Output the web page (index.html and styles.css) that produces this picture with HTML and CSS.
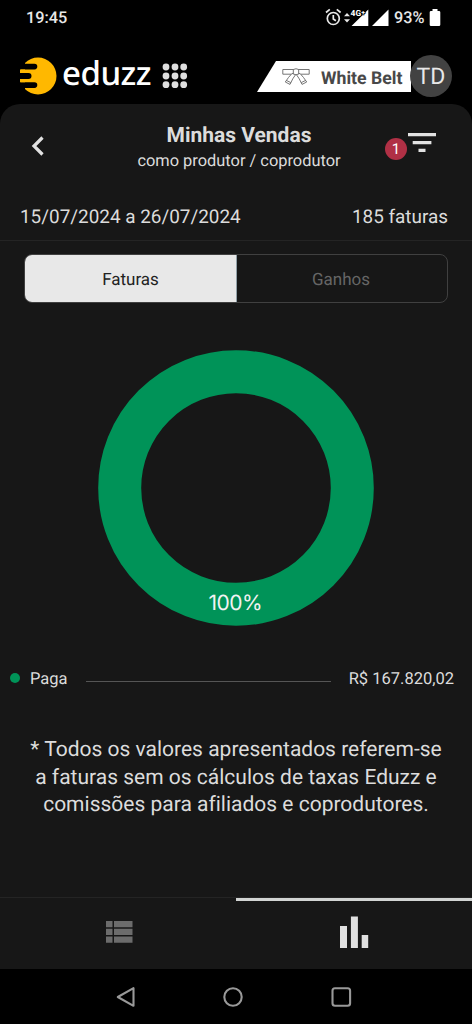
FILE: index.html
```html
<!DOCTYPE html>
<html lang="pt-BR">
<head>
<meta charset="utf-8">
<title>Minhas Vendas</title>
<link rel="stylesheet" href="styles.css">
</head>
<body>
<div class="phone">
  <div class="status">
    <span class="clock">19:45</span>
    <svg class="status-icons" width="66" height="22" viewBox="0 0 66 22">
      <circle cx="8.3" cy="11.5" r="6" fill="none" stroke="#e8e8e8" stroke-width="1.7"/>
      <path d="M8.3 8v4l2.6 1.8M1 5.5l3.8-3.2M15.6 5.5l-3.8-3.2" fill="none" stroke="#e8e8e8" stroke-width="1.7"/>
      <path d="M19 9.3l3-3.3 3 3.3zM19 12.2l3 3.3 3-3.3z" fill="#e8e8e8"/>
      <path d="M26.500 19L43.300 2.500v16.500zM47 19L63.500 2.500v16.500z" fill="#fff"/>
      <text class="network" x="25.500" y="8.600">4G<tspan dy="-1" font-size="7">+</tspan></text>
    </svg>
    <span class="percent">93%</span>
    <svg class="battery" width="12" height="18" viewBox="0 0 12 18"><path d="M3.500 0h5v2H10q1.300 0 1.300 1.300v12.400q0 1.300-1.300 1.300H2Q.7 17 .7 15.700V3.300Q.7 2 2 2h1.500z" fill="#fff"/></svg>
  </div>
  <header class="topbar">
    <svg class="mark" width="37" height="38" viewBox="0 0 37 38">
      <circle cx="18" cy="19" r="18.500" fill="#ffb800"/>
      <path d="M-1 0H5V7H-1zM-1 31H5V38H-1zM-1 6.800H14.500a2.800 2.800 0 0 1 0 5.600H-1zM-1 16H8.500a3 3 0 0 1 0 6H-1zM-1 25.300H14.500a2.800 2.800 0 0 1 0 5.600H-1z" fill="#000"/>
      <path d="M0 12.400h5v3.600H0zM0 22h5v3.300H0z" fill="#ffb800"/>
    </svg>
    <span class="brand">eduzz</span>
    <svg class="apps" width="26" height="26" viewBox="0 0 26 26" fill="#dedede">
      <circle cx="4" cy="4" r="3.400"/><circle cx="13" cy="4" r="3.400"/><circle cx="21.700" cy="4" r="3.400"/>
      <circle cx="4" cy="13" r="3.400"/><circle cx="13" cy="13" r="3.400"/><circle cx="21.700" cy="13" r="3.400"/>
      <circle cx="4" cy="21.700" r="3.400"/><circle cx="13" cy="21.700" r="3.400"/><circle cx="21.700" cy="21.700" r="3.400"/>
    </svg>
    <div class="belt">
      <svg class="belt-icon" width="28" height="17" viewBox="0 0 28 17" fill="#fff" stroke="#666" stroke-width=".9" stroke-linejoin="round">
        <path d="M.8 1.500H12v4.700H.8zM16 1.500h11.200v4.700H16z"/>
        <path d="M10 5.500Q6.500 9 3.300 14l4.700 2.400Q10.500 10.500 14 6zM18 5.500Q21.500 9 24.700 14L20 16.400Q17.500 10.500 14 6z"/>
        <path d="M11.300 1.500Q14 0 16.700 1.500V6Q14 7.500 11.300 6z"/>
        <path d="M4.300 12.400l4.500 2.200M23.700 12.400l-4.500 2.200" fill="none"/>
      </svg>
      <span class="belt-name">White Belt</span>
    </div>
    <span class="avatar">TD</span>
  </header>
  <main class="panel">
    <div class="heading">
      <svg class="back" width="14" height="20" viewBox="0 0 14 20"><path d="M11.500 1.500L3 10l8.500 8.500" fill="none" stroke="#e2e2e2" stroke-width="3.200"/></svg>
      <div class="titles">
        <h1>Minhas Vendas</h1>
        <p>como produtor / coprodutor</p>
      </div>
      <div class="filter">
        <span class="count">1</span>
        <svg width="28" height="20" viewBox="0 0 28 20"><path d="M0 0h28v3.200H0zM4.700 8h18.700v3.200H4.700zM10.500 15.800h7V19h-7z" fill="#e2e2e2"/></svg>
      </div>
    </div>
    <div class="summary"><span class="period">15/07/2024 a 26/07/2024</span><span class="invoices">185 faturas</span></div>
    <div class="tabs"><span class="tab active">Faturas</span><span class="tab">Ganhos</span></div>
    <svg class="chart" width="276" height="276" viewBox="0 0 276 276">
      <circle cx="138" cy="138" r="116.300" fill="none" stroke="#009358" stroke-width="43"/>
      <text class="share" x="137.500" y="259.500" text-anchor="middle" textLength="54">100%</text>
    </svg>
    <div class="legend"><i class="dot"></i><span class="legend-name">Paga</span><i class="rule"></i><span class="amount">R$ 167.820,02</span></div>
    <p class="note">* Todos os valores apresentados referem-se<br>a faturas sem os cálculos de taxas Eduzz e<br>comissões para afiliados e coprodutores.</p>
    <nav class="views">
      <span class="view"><svg width="27" height="22" viewBox="0 0 27 22"><path d="M0 0h6.500v6.300H0zM8 0h18.500v6.300H8zM0 7.800h6.500v6.200H0zM8 7.800h18.500v6.200H8zM0 15.500h6.500v6.300H0zM8 15.500h18.500v6.300H8z" fill="#6c6c6c"/></svg></span>
      <span class="view current"><svg width="30" height="32" viewBox="0 0 30 32"><path d="M1 10h7v22H1zM11.900 0.500h7V32h-7zM22.700 19h6.500v13h-6.500z" fill="#e0e0e0"/></svg></span>
    </nav>
  </main>
  <div class="system">
    <svg width="236" height="22" viewBox="0 0 236 22" fill="none" stroke="#999" stroke-width="2.100" stroke-linejoin="round">
      <path d="M1.800 11L17.500 2.200v17.600z"/><circle cx="117" cy="11" r="8.700"/><rect x="216.500" y="2.200" width="17.600" height="17.600" rx="2.500"/>
    </svg>
  </div>
</div>
</body>
</html>
```
FILE: styles.css
```css
* { box-sizing: border-box; }
body { margin: 0; background: #000; color: #dcdcdc; font-family: Roboto, sans-serif; text-rendering: geometricPrecision; font-variant-ligatures: none; }
h1, p { margin: 0; }
svg { display: block; flex: none; }
span { white-space: nowrap; }
.phone { width: 472px; height: 1024px; display: flex; flex-direction: column; overflow: hidden; }
.status { height: 50px; padding: 7px 31px 0 26px; display: flex; align-items: flex-start; color: #e8e8e8; font-size: 16.300px; line-height: 22px; font-weight: 500; }
.status-icons { margin-left: auto; }
.network { font: 700 8.500px Roboto, sans-serif; fill: #fff; stroke: #000; stroke-width: 1.500px; paint-order: stroke; }
.percent { width: 31px; margin-left: 3px; }
.battery { margin: 2px 0 0 4px; }
.topbar { height: 54px; padding: 0 20px 0 20px; display: flex; align-items: flex-start; }
.mark { margin-top: 7px; }
.brand { width: 92px; margin-left: 5px; font: 500 33px/40px "Noto Sans", sans-serif; letter-spacing: -.5px; color: #fff; padding-top: 3px; }
.apps { margin: 13px 0 0 8px; }
.belt { width: 154px; height: 31px; margin: 11px 0 0 auto; padding-left: 25px; display: flex; align-items: center; gap: 11px; background: #fff; clip-path: polygon(19px 0, 100% 0, 100% 100%, 0 100%); }
.belt-icon { margin-top: -1px; }
.belt-name { color: #484848; font-weight: 700; font-size: 17.700px; padding-top: 4px; }
.avatar { width: 42px; height: 42px; margin: 5px 0 0 -1px; border-radius: 50%; background: #424242; color: #e8e8e8; font-size: 23px; line-height: 43px; text-align: center; z-index: 1; }
.panel { height: 865px; background: #171717; border-radius: 20px 20px 0 0; display: flex; flex-direction: column; }
.heading { height: 89px; display: grid; grid-template-columns: 110px 1fr 110px; }
.back { margin: 32px 0 0 31px; }
.titles { text-align: center; padding-top: 19px; margin: 0 -6px 0 0; }
h1 { font-size: 21px; line-height: 26px; font-weight: 700; }
.titles p { font-size: 16.400px; line-height: 25px; }
.filter { display: flex; align-items: flex-start; padding: 29px 0 0 23px; gap: 1px; }
.count { width: 22px; height: 22px; margin-top: 5px; border-radius: 50%; background: #b03045; color: #fff; font-size: 15px; line-height: 22px; text-align: center; }
.summary { height: 48px; padding: 0 24px 0 20px; border-bottom: 1px solid #242424; display: flex; justify-content: space-between; font-size: 18.900px; line-height: 47px; }
.tabs { height: 49px; margin: 13px 24px 0; display: grid; grid-template-columns: 212px 1fr; border: 1px solid #404040; border-radius: 8px; overflow: hidden; font-size: 17px; line-height: 50px; text-align: center; }
.tab { color: #666; padding-right: 2px; }
.tab.active { color: #222; background: #e8e8e8; border-right: 1px solid #91a0a8; padding-right: 0; }
.chart { margin: 47px auto 0; }
.share { font: 400 21px Inter, sans-serif; fill: #f2f2f2; }
.legend { height: 30px; margin-top: 37px; padding: 0 18px 0 10px; display: flex; align-items: center; font-size: 16.500px; }
.legend span { padding-top: 2px; }
.dot { width: 10px; height: 10px; border-radius: 50%; background: #009358; margin-right: 10px; }
.rule { flex: 1; height: 1px; background: #555; margin: 6px 18px 0; }
.note { margin-top: 44px; text-align: center; font-size: 21px; line-height: 27.500px; }
.views { height: 72px; margin-top: auto; display: grid; grid-template-columns: 1fr 1fr; border-top: 1px solid #242424; }
.view { display: flex; justify-content: center; align-items: flex-start; padding-top: 23px; border-top: 0 solid #d2d4d3; padding-left: 2px; }
.view.current { border-top-width: 3px; padding: 15px 0 0; }
.system { height: 55px; padding: 17px 0 0 116px; }
```
